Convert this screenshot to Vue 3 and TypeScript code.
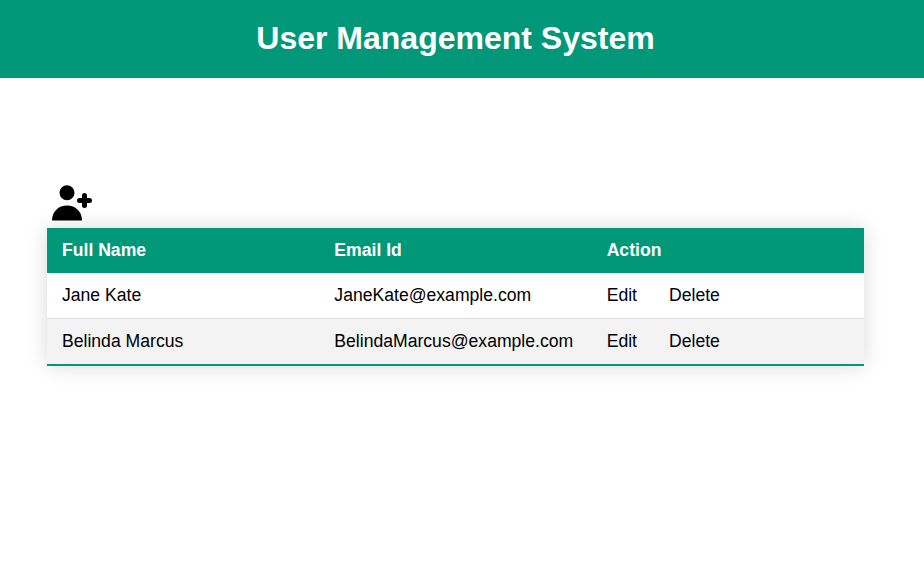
<script setup lang="ts">
interface User {
  name: string
  email: string
}

const users: User[] = [
  { name: 'Jane Kate', email: 'JaneKate@example.com' },
  { name: 'Belinda Marcus', email: 'BelindaMarcus@example.com' },
]
</script>

<template>
  <header class="header">
    <h1>User Management System</h1>
  </header>
  <main class="container">
    <a class="add-user" aria-label="Add user">
      <svg width="40" height="36" viewBox="0 0 40 36">
        <circle cx="15" cy="7.8" r="7.5" />
        <path d="M0 35.5C0 26.5 6.7 20.5 15 20.5S30 26.5 30 35.5Z" />
        <path class="plus" d="M32.5 10.5V20.5M27.5 15.5H37.5" />
      </svg>
    </a>
    <table class="users">
      <thead>
        <tr>
          <th>Full Name</th>
          <th>Email Id</th>
          <th>Action</th>
        </tr>
      </thead>
      <tbody>
        <tr v-for="user in users" :key="user.email">
          <td>{{ user.name }}</td>
          <td>{{ user.email }}</td>
          <td><a class="action">Edit</a><a class="action">Delete</a></td>
        </tr>
      </tbody>
    </table>
  </main>
</template>

<style>
body {
  background: #fff;
  font-family: "Liberation Sans", Arial, sans-serif;
}
</style>

<style scoped>
.header {
  height: 78px;
  background: #009879;
  color: #fff;
  text-align: center;
}
h1 {
  margin: 0;
  padding-right: 13px;
  font-size: 32px;
  line-height: 76px;
}
.container {
  box-sizing: border-box;
  min-height: 494px;
  padding: 107px 60px 0 47px;
}
.add-user {
  display: block;
  height: 43px;
  padding-left: 5px;
}
.add-user svg {
  display: block;
}
.plus {
  fill: none;
  stroke: #000;
  stroke-width: 5;
  stroke-linecap: round;
}
.users {
  width: 817px;
  table-layout: fixed;
  border-collapse: collapse;
  font-size: 17.6px;
  line-height: 21px;
  box-shadow: 0 0 20px rgba(0, 0, 0, 0.15);
}
th {
  padding: 12px 15px;
  background: #009879;
  color: #fff;
  text-align: left;
}
td {
  padding: 12px 15px;
}
tbody tr {
  border-bottom: 1px solid #ddd;
}
tbody tr:nth-of-type(even) {
  background: #f3f3f3;
}
tbody tr:last-of-type {
  border-bottom: 2px solid #009879;
}
.action {
  color: #001;
}
.action + .action {
  margin-left: 32px;
}
</style>
